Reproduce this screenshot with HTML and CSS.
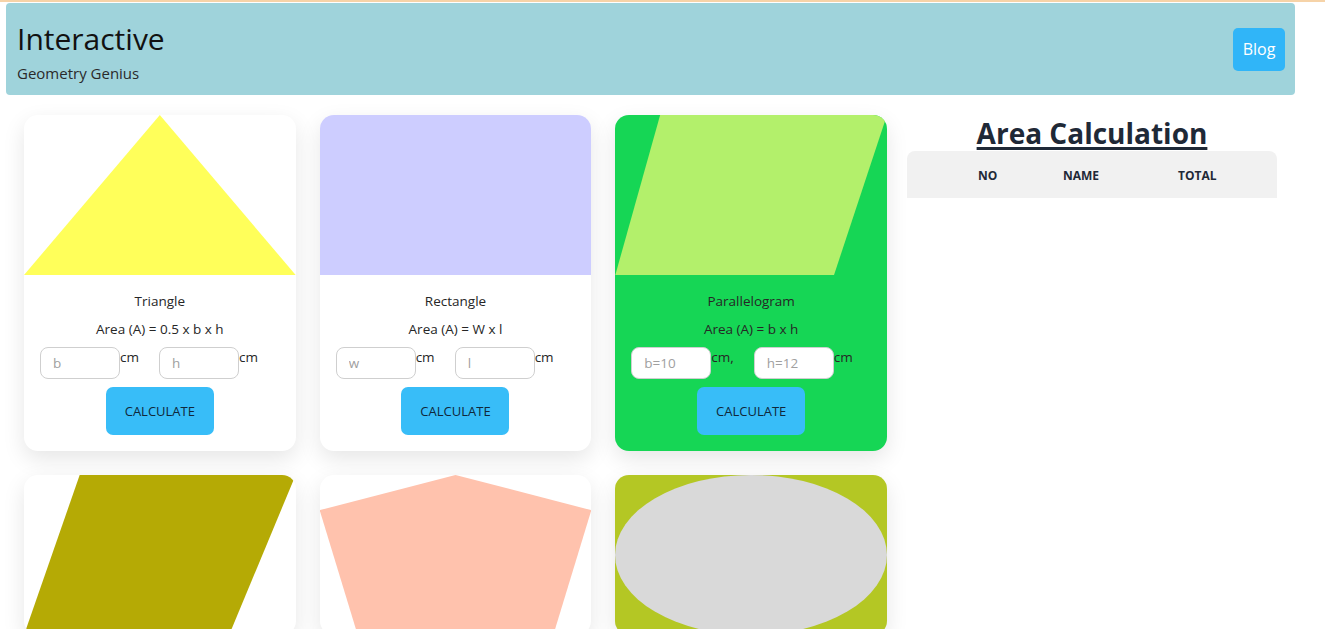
FILE: index.html
```html
<!DOCTYPE html>
<html lang="en">
<head>
<meta charset="utf-8">
<title>Geometry Genius</title>
<link rel="stylesheet" href="styles.css">
</head>
<body>
<header class="topbar">
  <div class="brand">
    <h1 class="brand-title">Interactive</h1>
    <p class="brand-sub">Geometry Genius</p>
  </div>
  <a class="blog-btn" href="#">Blog</a>
</header>
<main class="main">
  <section class="cards">
    <article class="card">
      <div class="shape-box"><div class="shape shape-triangle"></div></div>
      <div class="card-body">
        <p class="card-title">Triangle</p>
        <p class="card-formula">Area (A) = 0.5 x b x h</p>
        <div class="inputs">
          <input class="field" type="text" placeholder="b"><span class="unit">cm</span>
          <input class="field field-second" type="text" placeholder="h"><span class="unit">cm</span>
        </div>
        <button class="calc-btn" type="button">CALCULATE</button>
      </div>
    </article>
    <article class="card">
      <div class="shape-box"><div class="shape shape-rectangle"></div></div>
      <div class="card-body">
        <p class="card-title">Rectangle</p>
        <p class="card-formula">Area (A) = W x l</p>
        <div class="inputs">
          <input class="field" type="text" placeholder="w"><span class="unit">cm</span>
          <input class="field field-second" type="text" placeholder="l"><span class="unit">cm</span>
        </div>
        <button class="calc-btn" type="button">CALCULATE</button>
      </div>
    </article>
    <article class="card card-green">
      <div class="shape-box"><div class="shape shape-parallelogram"></div></div>
      <div class="card-body">
        <p class="card-title">Parallelogram</p>
        <p class="card-formula">Area (A) = b x h</p>
        <div class="inputs">
          <input class="field" type="text" placeholder="b=10"><span class="unit">cm,</span>
          <input class="field field-second" type="text" placeholder="h=12"><span class="unit">cm</span>
        </div>
        <button class="calc-btn" type="button">CALCULATE</button>
      </div>
    </article>
    <article class="card">
      <div class="shape-box"><div class="shape shape-rhombus"></div></div>
    </article>
    <article class="card">
      <div class="shape-box"><div class="shape shape-pentagon"></div></div>
    </article>
    <article class="card card-lime">
      <div class="shape-box"><div class="shape shape-ellipse"></div></div>
    </article>
  </section>
  <aside class="summary">
    <h2 class="summary-title">Area Calculation</h2>
    <table class="summary-table">
      <colgroup><col class="col-no"><col class="col-name"><col class="col-total"></colgroup>
      <thead>
        <tr><th class="th-no">NO</th><th>NAME</th><th>TOTAL</th></tr>
      </thead>
      <tbody></tbody>
    </table>
  </aside>
</main>
</body>
</html>
```
FILE: styles.css
```css
* { box-sizing: border-box; }

html, body {
  margin: 0;
  padding: 0;
  background: #ffffff;
}

body {
  font-family: "Open Sans", "Noto Sans", "Liberation Sans", sans-serif;
  color: #222;
  border-top: 2px solid #f6d3a8;
  width: 1325px;
}

.topbar {
  margin: 1px 30px 0 6px;
  height: 92px;
  background: #9fd3db;
  border-radius: 4px;
  display: flex;
  align-items: center;
  justify-content: space-between;
  padding: 0 10px 0 11px;
}

.brand {
  padding-top: 4px;
}

.brand-title {
  margin: 0;
  font-size: 30px;
  font-weight: 400;
  line-height: 38px;
  color: #111;
}

.brand-sub {
  margin: 6px 0 0;
  font-size: 15px;
  line-height: 18px;
  color: #2a2a2a;
}

.blog-btn {
  display: flex;
  align-items: center;
  justify-content: center;
  width: 52px;
  height: 43px;
  background: #30b5f8;
  border-radius: 5px;
  color: #fff;
  font-size: 16px;
  text-decoration: none;
}

.main {
  display: flex;
  align-items: flex-start;
  gap: 20px;
  padding: 20px 0 0 24px;
}

.cards {
  width: 863px;
  display: grid;
  grid-template-columns: repeat(3, 1fr);
  gap: 24px;
}

.card {
  background: #fff;
  border-radius: 14px;
  overflow: hidden;
  box-shadow: 0 8px 22px rgba(0, 0, 0, 0.1);
}

.card-green { background: #16d655; }
.card-lime { background: #b4c724; }

.shape-box {
  height: 160px;
}

.shape {
  width: 100%;
  height: 100%;
}

.shape-triangle {
  background: #ffff5a;
  clip-path: polygon(50% 0, 100% 100%, 0 100%);
}

.shape-rectangle { background: #cdcdff; }

.shape-parallelogram {
  background: #b3f06b;
  clip-path: polygon(16.5% 0, 100% 0, 80.5% 100%, 0 100%);
}

.shape-rhombus {
  background: #b5aa05;
  clip-path: polygon(20.5% 0, 100% 0, 75.5% 100%, 0 100%);
}

.shape-pentagon {
  background: #ffc2ad;
  clip-path: polygon(50% 0, 100% 22%, 86% 100%, 14% 100%, 0 22%);
}

.shape-ellipse {
  background: #d9d9d9;
  border-radius: 50%;
}

.card-body {
  padding: 16px 16px 16px;
  display: flex;
  flex-direction: column;
  align-items: center;
}

.card-title,
.card-formula {
  margin: 0;
  font-size: 13.5px;
  line-height: 20px;
  color: #262626;
}

.card-formula { margin-top: 8px; }

.inputs {
  margin-top: 8px;
  align-self: stretch;
  display: flex;
  align-items: flex-start;
}

.field {
  width: 80px;
  height: 32px;
  border: 1px solid #cfcfcf;
  border-radius: 8px;
  background: #fff;
  padding: 0 12px;
  font-family: inherit;
  font-size: 13.5px;
  color: #333;
  outline: none;
}

.field::placeholder { color: #a0a0a0; }

.field-second { margin-left: 20px; }

.unit {
  font-size: 13.5px;
  line-height: 20px;
  color: #262626;
}

.calc-btn {
  margin-top: 8px;
  width: 108px;
  height: 48px;
  border: 0;
  border-radius: 7px;
  background: #38bdf8;
  color: #10283a;
  font-family: inherit;
  font-size: 13px;
  font-weight: 500;
}

.summary {
  width: 370px;
}

.summary-title {
  margin: 0;
  text-align: center;
  font-size: 28px;
  font-weight: 700;
  line-height: 36px;
  color: #1f2937;
  text-decoration: underline;
  text-decoration-thickness: 3px;
  text-underline-offset: 3px;
}

.summary-table {
  width: 370px;
  table-layout: fixed;
  border-collapse: collapse;
  background: #f1f1f1;
  border-radius: 8px 8px 0 0;
  overflow: hidden;
}

.col-no { width: 156px; }
.col-name { width: 115px; }
.col-total { width: 99px; }

.summary-table th {
  height: 47px;
  padding: 2px 0 0 0;
  text-align: left;
  font-size: 12px;
  font-weight: 700;
  color: #1f2937;
}

.summary-table .th-no { padding-left: 71px; }
```
